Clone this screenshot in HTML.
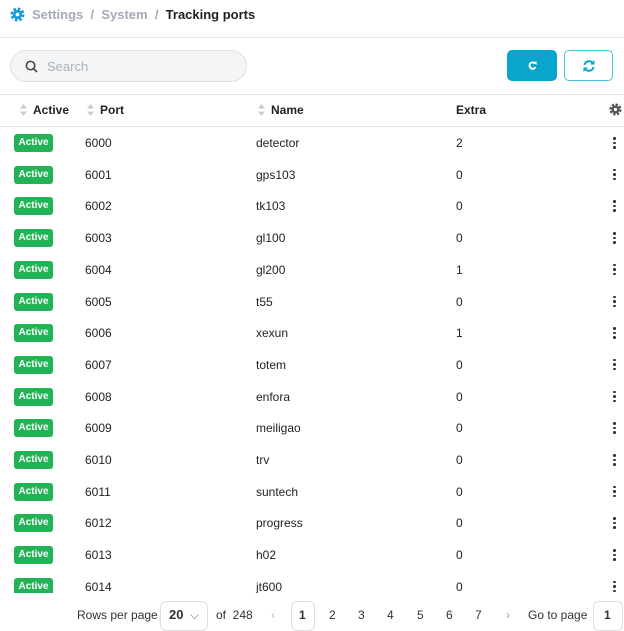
<!DOCTYPE html>
<html><head><meta charset="utf-8"><style>
*{box-sizing:border-box;margin:0;padding:0}
body{width:624px;height:620px;overflow:hidden;background:#fff;font-family:"Liberation Sans",sans-serif;color:#1f2937;position:relative;font-size:12px}
.abs{position:absolute}
.bc{left:10px;top:7px;font-size:13px;font-weight:bold;color:#a3aab5;display:flex;align-items:center;gap:0}
.bc .cur{color:#222}
.hr{left:0;width:624px;height:1px;background:#e3e5e8}
.search{left:10px;top:50px;width:237px;height:32px;border:1px solid #dde1e6;background:#f3f5f7;border-radius:16px}
.search span{position:absolute;left:36px;top:8px;font-size:13px;color:#aab1ba}
.b1{left:507px;top:50px;width:50px;height:31px;background:#0aa5cc;border-radius:5px}
.b2{left:564px;top:50px;width:49px;height:31px;border:1px solid #4cc0dc;border-radius:5px;background:#fff}
.th{top:103px;font-weight:bold;font-size:12px;color:#222;display:flex;align-items:center}
.th svg{margin-right:6px}
.row{position:absolute;left:0;width:624px;height:32px}
.badge{position:absolute;left:14px;top:-9px;width:39px;height:18px;background:#22b357;border-radius:3px;color:#fff;font-size:10px;font-weight:bold;text-align:center;line-height:18px}
.c{position:absolute;top:-7px;font-size:12px;color:#222}
.dots{position:absolute;left:613px;top:-6px;width:3px}
.dots i{display:block;width:2.5px;height:2.5px;background:#333;border-radius:50%;margin-bottom:2px}
.pg{top:608px;font-size:12px;color:#333}
.box{position:absolute;border:1px solid #dde1e6;border-radius:6px;top:601px;height:30px;background:#fff}
</style></head><body>
<div class="abs bc"><svg width="15" height="15" viewBox="0 0 24 24" style="margin-right:7px"><circle cx="12" cy="12" r="7.5" fill="#1a9ad6"/><circle cx="12" cy="12" r="9" fill="none" stroke="#1a9ad6" stroke-width="4.5" stroke-dasharray="4.2 2.87"/><circle cx="12" cy="12" r="3" fill="#fff"/></svg>Settings&nbsp;&nbsp;/&nbsp;&nbsp;System&nbsp;&nbsp;/&nbsp;&nbsp;<span class="cur">Tracking ports</span></div>
<div class="abs hr" style="top:37px"></div>
<div class="abs search"><svg class="abs" style="left:14px;top:9px" width="13" height="13" viewBox="0 0 14 14"><circle cx="6" cy="6" r="4.5" fill="none" stroke="#444" stroke-width="1.7"/><path d="M9.3 9.3L13 13" stroke="#444" stroke-width="1.7"/></svg><span>Search</span></div>
<div class="abs b1"><svg class="abs" style="left:21px;top:11px" width="9" height="9" viewBox="0 0 12 12"><path d="M9.5 3.5A4.2 4.2 0 1 0 10 8" fill="none" stroke="#fff" stroke-width="2.6"/><path d="M7 1h4.5v4.5z" fill="#fff"/></svg></div>
<div class="abs b2"><svg class="abs" style="left:17px;top:8px" width="14" height="14" viewBox="0 0 14 14"><path d="M2.5 6A4.6 4.6 0 0 1 11 4.5M11.5 8A4.6 4.6 0 0 1 3 9.5" fill="none" stroke="#0aa5cc" stroke-width="2"/><path d="M12.5 1v4.5H8zM1.5 13V8.5H6z" fill="#0aa5cc"/></svg></div>
<div class="abs hr" style="top:94px"></div>
<div class="abs th" style="left:20px"><svg width="7" height="12" viewBox="0 0 7 12"><path d="M3.5 0L7 4.5H0zM3.5 12L0 7.5h7z" fill="#c8cdd3"/></svg>Active</div>
<div class="abs th" style="left:87px"><svg width="7" height="12" viewBox="0 0 7 12"><path d="M3.5 0L7 4.5H0zM3.5 12L0 7.5h7z" fill="#c8cdd3"/></svg>Port</div>
<div class="abs th" style="left:258px"><svg width="7" height="12" viewBox="0 0 7 12"><path d="M3.5 0L7 4.5H0zM3.5 12L0 7.5h7z" fill="#c8cdd3"/></svg>Name</div>
<div class="abs th" style="left:456px">Extra</div>
<svg class="abs" style="left:609px;top:103px" width="13" height="13" viewBox="0 0 24 24"><circle cx="12" cy="12" r="7.5" fill="#555"/><circle cx="12" cy="12" r="9" fill="none" stroke="#555" stroke-width="4.5" stroke-dasharray="4.2 2.87"/><circle cx="12" cy="12" r="3" fill="#fff"/></svg>
<div class="abs hr" style="top:126px"></div>
<div class="abs" style="left:0;top:127px;width:624px;height:466px;overflow:hidden">
<script>
var d=[["6000","detector","2"],["6001","gps103","0"],["6002","tk103","0"],["6003","gl100","0"],["6004","gl200","1"],["6005","t55","0"],["6006","xexun","1"],["6007","totem","0"],["6008","enfora","0"],["6009","meiligao","0"],["6010","trv","0"],["6011","suntech","0"],["6012","progress","0"],["6013","h02","0"],["6014","jt600","0"]];
for(var i=0;i<d.length;i++){var y=16+i*31.7;document.write('<div class="row" style="top:'+y+'px;height:0"><div class="badge">Active</div><div class="c" style="left:85px">'+d[i][0]+'</div><div class="c" style="left:256px">'+d[i][1]+'</div><div class="c" style="left:456px">'+d[i][2]+'</div><div class="dots"><i></i><i></i><i></i></div></div>');}
</script>
</div>
<div class="abs pg" style="left:77px">Rows per page</div>
<div class="box" style="left:160px;width:48px"></div>
<div class="abs pg" style="left:169px;font-weight:bold;font-size:13px;top:607px">20</div>
<div class="abs pg" style="left:190px;color:#777">⌵</div>
<div class="abs pg" style="left:216px">of&nbsp;&nbsp;248</div>
<div class="abs pg" style="left:271px;color:#bbb">‹</div>
<div class="box" style="left:291px;width:24px"></div>
<div class="abs pg" style="left:299px;font-weight:bold">1</div>
<div class="abs pg" style="left:329px">2</div>
<div class="abs pg" style="left:358px">3</div>
<div class="abs pg" style="left:387px">4</div>
<div class="abs pg" style="left:417px">5</div>
<div class="abs pg" style="left:446px">6</div>
<div class="abs pg" style="left:475px">7</div>
<div class="abs pg" style="left:506px;color:#999">›</div>
<div class="abs pg" style="left:528px">Go to page</div>
<div class="box" style="left:593px;width:30px"></div>
<div class="abs pg" style="left:604px;font-weight:bold">1</div>
</body></html>
